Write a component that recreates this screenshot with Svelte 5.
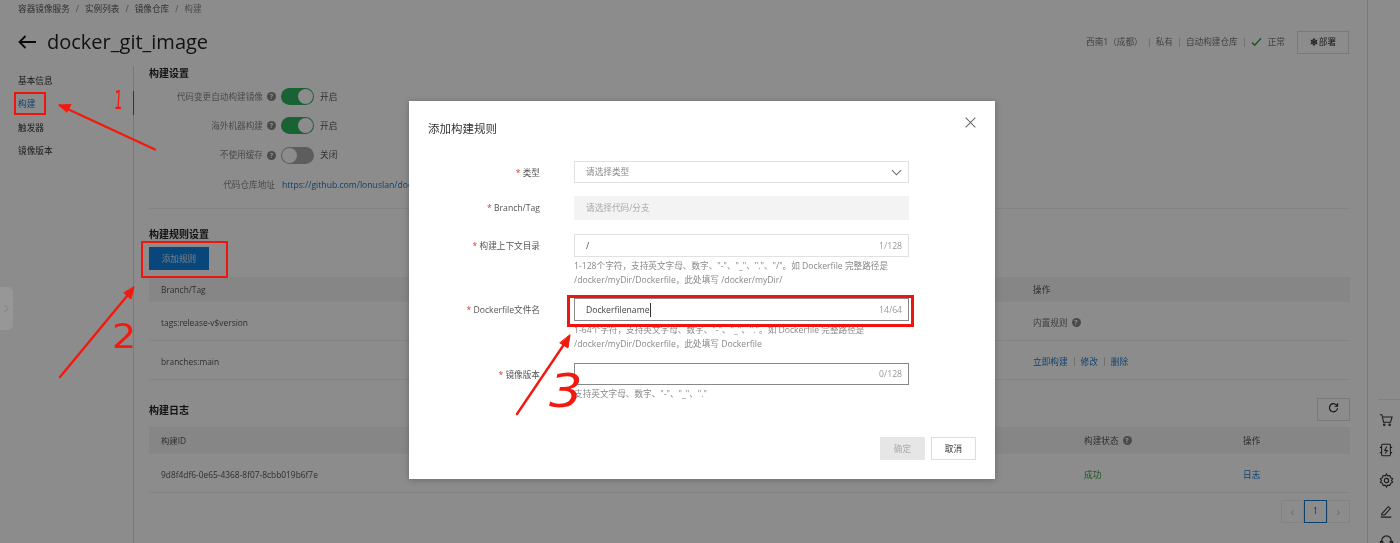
<script lang="ts">
  const crumbs = ['容器镜像服务', '实例列表', '镜像仓库', '构建'];
  const menu = ['基本信息', '构建', '触发器', '镜像版本'];
  const settings = [
    { label: '代码变更自动构建镜像', on: true, text: '开启' },
    { label: '海外机器构建', on: true, text: '开启' },
    { label: '不使用缓存', on: false, text: '关闭' }
  ];
</script>

<div class="page">
  <div class="workspace">
    <nav class="crumbs">
      {#each crumbs as c, i}
        {#if i > 0}<span class="sep">/</span>{/if}
        <span class:last={i === crumbs.length - 1}>{c}</span>
      {/each}
    </nav>

    <header class="titlebar">
      <svg class="back" viewBox="0 0 18 14" width="18" height="14" fill="none" stroke="#111" stroke-width="1.8">
        <path d="M18 7H1.5M7.5 1 1.5 7l6 6" />
      </svg>
      <h1>docker_git_image</h1>
      <div class="meta">
        <span>西南1（成都）</span><i></i>
        <span>私有</span><i></i>
        <span>自动构建仓库</span><i></i>
        <svg viewBox="0 0 12 10" width="11" height="10" fill="none" stroke="#2e9e3f" stroke-width="1.5"><path d="M1 5.5 4 8.5 11 1" /></svg>
        <span class="ok">正常</span>
        <button class="btn deploy">
          <svg viewBox="0 0 10 10" width="8" height="8" fill="none" stroke="#333" stroke-width="1.2">
            <circle cx="5" cy="5" r="3" />
            <path d="M5 0v10M0.7 2.500l8.600 5M0.7 7.500l8.600-5" />
          </svg>部署
        </button>
      </div>
    </header>

    <div class="body">
      <aside class="side">
        {#each menu as m, i}
          <div class="item" class:active={i === 1}>{m}</div>
        {/each}
      </aside>

      <main class="content">
        <h2>构建设置</h2>
        <div class="settings">
          {#each settings as s}
            <div class="setting">
              <div class="key">{s.label}<span class="q">?</span></div>
              <span class="toggle" class:on={s.on}></span>
              <span class="val">{s.text}</span>
            </div>
          {/each}
          <div class="setting">
            <div class="key plain">代码仓库地址</div>
            <a class="link" href="#repo">https://github.com/lonuslan/docker_git_image</a>
          </div>
        </div>
        <div class="divider"></div>

        <h2 class="rules-title">构建规则设置</h2>
        <button class="btn primary">添加规则</button>
        <div class="table rules">
          <div class="tr head"><span>Branch/Tag</span><span>操作</span></div>
          <div class="tr"><span>tags:release-v$version</span><span class="muted">内置规则<span class="q">?</span></span></div>
          <div class="tr">
            <span>branches:main</span>
            <span class="actions"><a href="#b">立即构建</a><i></i><a href="#e">修改</a><i></i><a href="#d">删除</a></span>
          </div>
        </div>

        <div class="log-head">
          <h2>构建日志</h2>
          <button class="btn refresh" aria-label="刷新">
            <svg viewBox="0 0 14 14" width="11" height="11" fill="none" stroke="#222" stroke-width="1.4">
              <path d="M11.8 5.2A5.2 5.2 0 1 0 12.2 8" /><path d="M12.2 1.6v3.9H8.4" fill="none" />
            </svg>
          </button>
        </div>
        <div class="table logs">
          <div class="tr head"><span>构建ID</span><span>构建状态<span class="q">?</span></span><span>操作</span></div>
          <div class="tr">
            <span>9d8f4df6-0e65-4368-8f07-8cbb019b6f7e</span>
            <span class="ok">成功</span>
            <a href="#log">日志</a>
          </div>
        </div>
        <div class="pager">
          <span class="pg dim">‹</span><span class="pg cur">1</span><span class="pg dim">›</span>
        </div>
      </main>
    </div>
  </div>

  <aside class="rail">
    <div class="tools">
      <svg viewBox="0 0 16 16" width="14" height="14" fill="none" stroke="#333" stroke-width="1.2"><path d="M1 2h2.4l1.8 8.5h8L15 4.500H4" /><circle cx="6" cy="13.5" r=".9" /><circle cx="12.2" cy="13.5" r=".9" /></svg>
      <svg viewBox="0 0 16 16" width="14" height="14" fill="none" stroke="#333" stroke-width="1.2"><rect x="3" y="1.5" width="10" height="13" rx="1" /><path d="M1 5h2M1 11h2M13 5h2M13 11h2M9 4 6.5 8.500h3L7 12" /></svg>
      <svg viewBox="0 0 16 16" width="15" height="15" fill="none" stroke="#333" stroke-width="1.2"><path d="M8 1l1.2 2.100 2.400-.4.800 2.300 2.100 1.200L13.400 8l1.100 1.800-2.100 1.200-.8 2.300-2.400-.4L8 15l-1.200-2.100-2.400.4-.8-2.300-2.100-1.200L2.600 8 1.500 6.200 3.600 5l.8-2.300 2.400.4z" /><circle cx="8" cy="8" r="2.3" /></svg>
      <svg viewBox="0 0 16 16" width="14" height="14" fill="none" stroke="#333" stroke-width="1.2"><path d="M3 11.500 10.500 3l2.500 2.200-6.600 7.300H3zM2 15h12" /></svg>
      <svg viewBox="0 0 16 16" width="15" height="15" fill="none" stroke="#333" stroke-width="1.2"><path d="M3 10V7a5 5 0 0 1 10 0v3" /><rect x="1.5" y="8" width="2.5" height="4" /><rect x="12" y="8" width="2.5" height="4" /></svg>
    </div>
  </aside>

  <div class="mask"></div>
  <div class="collapse">
    <svg viewBox="0 0 6 10" width="5" height="9" fill="none" stroke="#777" stroke-width="1"><path d="M1 1l4 4-4 4" /></svg>
  </div>

  <section class="modal">
    <svg class="close" viewBox="0 0 12 12" width="11" height="11" fill="none" stroke="#666" stroke-width="1.1"><path d="M.7.7l10.600 10.600M11.300.7.7 11.300" /></svg>
    <h3>添加构建规则</h3>
    <div class="form">
      <div class="row">
        <label><b>*</b> 类型</label>
        <div class="field select h22">
          <span class="ph">请选择类型</span>
          <svg viewBox="0 0 12 7" width="11" height="7" fill="none" stroke="#666" stroke-width="1.1"><path d="M1 1l5 5 5-5" /></svg>
        </div>
      </div>
      <div class="row r13">
        <label><b>*</b> Branch/Tag</label>
        <div class="field disabled"><span class="ph">请选择代码/分支</span></div>
      </div>
      <div class="row r14">
        <label><b>*</b> 构建上下文目录</label>
        <div>
          <div class="field h23"><span>/</span><em>1/128</em></div>
          <p class="help">1-128个字符，支持英文字母、数字、"-"、"_"、"."、"/"。如 Dockerfile 完整路径是<br />/docker/myDir/Dockerfile，此处填写 /docker/myDir/</p>
        </div>
      </div>
      <div class="row r11">
        <label><b>*</b> Dockerfile文件名</label>
        <div>
          <div class="field h23 focus"><span class="caret">Dockerfilename</span><em>14/64</em></div>
          <p class="help">1-64个字符，支持英文字母、数字、"-"、"_"、"."。如 Dockerfile 完整路径是<br />/docker/myDir/Dockerfile，此处填写 Dockerfile</p>
        </div>
      </div>
      <div class="row r12">
        <label><b>*</b> 镜像版本</label>
        <div>
          <div class="field h22 focus"><span></span><em>0/128</em></div>
          <p class="help">支持英文字母、数字、"-"、"_"、"."</p>
        </div>
      </div>
    </div>
    <footer>
      <button class="btn off">确定</button>
      <button class="btn">取消</button>
    </footer>
  </section>

  <!-- red marks drawn over the screenshot -->
  <div class="mark m1"></div>
  <div class="mark m2"></div>
  <div class="mark m3"></div>
  <svg class="scribble" viewBox="0 0 1400 543" width="1400" height="543" fill="none" stroke="#f21a0e" stroke-width="2.4" stroke-linecap="round">
    <path d="M155 149.500 60 105.500" />
    <path d="M59 105 71 104.500 67 112z" fill="#f21a0e" stroke-width="1" />
    <path d="M60 377 132 290" />
    <path d="M134 287 131 299 124 293z" fill="#f21a0e" stroke-width="1" />
    <path d="M517 414 569 337" />
    <path d="M570 335 568 348 560 343z" fill="#f21a0e" stroke-width="1" />
  </svg>
  <span class="num n1">1</span>
  <span class="num n2">2</span>
  <span class="num n3">3</span>
</div>

<style>
  :global(body) {
    margin: 0;
    background: #fff;
  }

  .page {
    position: relative;
    display: flex;
    width: 1400px;
    height: 543px;
    overflow: hidden;
    background: #fff;
    color: #333;
    font: 8.650px/14px "Open Sans", "Noto Sans CJK SC", sans-serif;
    filter: blur(0.3px);
  }

  .workspace {
    flex: 1;
    min-width: 0;
  }

  .crumbs {
    display: flex;
    gap: 6px;
    height: 18px;
    padding-left: 18px;
    line-height: 18px;
    color: #555;
  }

  .crumbs .sep,
  .crumbs .last {
    color: #888;
  }

  .titlebar {
    display: flex;
    align-items: center;
    height: 48px;
    padding: 0 18px;
  }

  .back {
    margin-right: 11px;
  }

  h1 {
    margin: 0;
    font-size: 20px;
    font-weight: 400;
    color: #222;
  }

  .meta {
    display: flex;
    align-items: center;
    margin-left: auto;
    color: #777;
  }

  .meta i {
    width: 1px;
    height: 9px;
    margin: 0 6px;
    background: #ccc;
  }

  .meta .ok {
    margin: 0 12px 0 6px;
    color: #777;
  }

  .btn {
    height: 23px;
    padding: 0;
    border: 1px solid #ddd;
    background: #fff;
    color: #333;
    font: inherit;
    width: 45px;
  }

  .deploy {
    width: 52px;
  }

  .deploy svg {
    margin-right: 1px;
    vertical-align: -1px;
  }

  .body {
    display: flex;
    height: 477px;
  }

  .side {
    flex: none;
    width: 133px;
    padding-top: 4px;
    border-right: 1px solid #ddd;
  }

  .item {
    position: relative;
    height: 23.300px;
    padding-left: 18px;
    line-height: 23px;
    color: #333;
  }

  .item.active {
    color: #1a76c8;
  }

  .item.active::after {
    content: '';
    position: absolute;
    right: -1px;
    top: -2.500px;
    width: 1px;
    height: 24px;
    background: #1a76c8;
  }

  .content {
    flex: 1;
    min-width: 0;
    padding: 0 17px 0 15px;
  }

  h2 {
    margin: 0;
    font-size: 10px;
    line-height: 14px;
    font-weight: 700;
    color: #222;
  }

  .settings {
    margin-top: 2px;
  }

  .setting {
    display: flex;
    align-items: center;
    height: 29.300px;
  }

  .key {
    display: flex;
    align-items: center;
    justify-content: flex-end;
    width: 127px;
    padding-right: 5px;
    color: #888;
    flex: none;
  }

  .key.plain {
    width: 126px;
    padding-right: 7px;
  }

  .q {
    display: inline-flex;
    align-items: center;
    justify-content: center;
    width: 9px;
    height: 9px;
    margin-left: 4px;
    border-radius: 50%;
    background: #888;
    color: #fff;
    font-size: 7px;
    font-weight: 700;
    line-height: 1;
  }

  .toggle {
    position: relative;
    width: 33px;
    height: 17px;
    border-radius: 9px;
    background: #aaa;
    flex: none;
  }

  .toggle::after {
    content: '';
    position: absolute;
    top: 1px;
    left: 1px;
    width: 15px;
    height: 15px;
    border-radius: 50%;
    background: #fff;
  }

  .toggle.on {
    background: #2fb35f;
  }

  .toggle.on::after {
    left: 17px;
  }

  .val {
    margin-left: 6px;
    color: #555;
  }

  a {
    color: #1a76c8;
    text-decoration: none;
  }

  .divider {
    height: 1px;
    margin-top: 9px;
    background: #eee;
  }

  .rules-title {
    margin-top: 18px;
  }

  .primary {
    display: block;
    width: 60px;
    margin-top: 6px;
    border: 0;
    background: #1080e0;
    color: #cfe2f2;
  }

  .table .tr {
    display: grid;
    align-items: center;
    height: 39px;
    padding: 3px 0 0 12px;
    border-bottom: 1px solid #eee;
    box-sizing: border-box;
    color: #555;
  }

  .table .tr > span:first-child {
    font-size: 8.400px;
  }

  .table .head {
    padding-top: 0;
    background: #f5f5f5;
    border-bottom: 0;
  }

  .rules {
    margin-top: 7px;
  }

  .rules .tr {
    grid-template-columns: 872px 1fr;
  }

  .rules .head {
    height: 25px;
  }

  .muted {
    display: flex;
    align-items: center;
    color: #777;
  }

  .actions {
    display: flex;
    align-items: center;
  }

  .actions i {
    width: 1px;
    height: 9px;
    margin: 0 6px;
    background: #ccc;
  }

  .log-head {
    display: flex;
    align-items: center;
    justify-content: space-between;
    height: 23px;
    margin-top: 18px;
  }

  .refresh {
    width: 33px;
  }

  .logs {
    margin-top: 6px;
  }

  .logs .tr {
    grid-template-columns: 923px 159px 1fr;
  }

  .logs .head {
    height: 27px;
  }

  .logs .head span:nth-child(2) {
    display: flex;
    align-items: center;
  }

  .logs .ok {
    color: #2e9e3f;
  }

  .pager {
    display: flex;
    justify-content: flex-end;
    margin-top: 7px;
  }

  .pg {
    width: 23px;
    height: 23px;
    box-sizing: border-box;
    border: 1px solid #eee;
    text-align: center;
    line-height: 21px;
    color: #555;
  }

  .pg.dim {
    color: #ccc;
    font-size: 13px;
  }

  .pg.cur {
    border-color: #1a76c8;
  }

  .rail {
    flex: none;
    width: 32px;
    border-left: 1px solid #ddd;
  }

  .tools {
    display: flex;
    flex-direction: column;
    align-items: center;
    gap: 16px;
    width: 16px;
    margin: 399px 0 0 10px;
    padding: 13px 6px 0 0;
    border-top: 1px solid #e6e6e6;
  }

  .mask {
    position: absolute;
    inset: 0;
    background: rgba(0, 0, 0, 0.45);
  }

  .collapse {
    position: absolute;
    left: 0;
    top: 287px;
    display: flex;
    align-items: center;
    justify-content: center;
    width: 13px;
    height: 43px;
    border-radius: 0 5px 5px 0;
    background: rgba(255, 255, 255, 0.1);
  }

  .modal {
    position: absolute;
    left: 409px;
    top: 101px;
    width: 586px;
    height: 378px;
    box-sizing: border-box;
    padding: 20px 19px 19px;
    background: #fff;
    box-shadow: 0 1px 6px rgba(0, 0, 0, 0.25);
  }

  .close {
    position: absolute;
    right: 19px;
    top: 16px;
  }

  h3 {
    margin: 0;
    font-size: 11.500px;
    line-height: 16px;
    font-weight: 400;
    color: #333;
  }

  .form {
    margin-top: 24px;
  }

  .row {
    display: grid;
    grid-template-columns: 112px 335px;
    column-gap: 34px;
  }

  .r13 {
    margin-top: 13px;
  }

  .r14 {
    margin-top: 14px;
  }

  .r11 {
    margin-top: 11px;
  }

  .r12 {
    margin-top: 12px;
  }

  .row label {
    height: 22px;
    line-height: 24px;
    text-align: right;
    color: #555;
    white-space: nowrap;
  }

  .row label b {
    color: #e0362c;
    font-weight: 400;
  }

  .field {
    display: flex;
    align-items: center;
    justify-content: space-between;
    height: 24px;
    box-sizing: border-box;
    padding: 0 6px 0 11px;
    border: 1px solid #e1e1e1;
    color: #444;
  }

  .field em {
    font-style: normal;
    color: #999;
  }

  .field.h22 {
    height: 22px;
  }

  .field.h23 {
    height: 23px;
  }

  .field.focus {
    border-color: #888;
  }

  .field.disabled {
    border-color: #f3f3f3;
    background: #f3f3f3;
  }

  .ph {
    color: #aaa;
  }

  .select .ph {
    color: #888;
  }

  .caret {
    border-right: 1px solid #333;
  }

  .help {
    margin: 3px 0 0;
    line-height: 13.500px;
    color: #888;
    white-space: nowrap;
  }

  footer {
    display: flex;
    justify-content: flex-end;
    gap: 6px;
    margin-top: 35.500px;
  }

  .off {
    border-color: #e6e6e6;
    background: #e6e6e6;
    color: #aaa;
  }

  .mark {
    position: absolute;
    box-sizing: border-box;
    border: 2.500px solid #f0140c;
  }

  .m1 {
    left: 14px;
    top: 92px;
    width: 32px;
    height: 23px;
  }

  .m2 {
    left: 141px;
    top: 241px;
    width: 87px;
    height: 37px;
  }

  .m3 {
    left: 567px;
    top: 295px;
    width: 347px;
    height: 32px;
    border-width: 3px;
  }

  .scribble {
    position: absolute;
    inset: 0;
    pointer-events: none;
  }

  .num {
    position: absolute;
    color: #f21a0e;
    font-family: "DejaVu Sans", sans-serif;
    line-height: 1;
  }

  .n1 {
    left: 110px;
    top: 87px;
    font-size: 26px;
    transform: scaleX(0.5) skewX(-6deg);
  }

  .n2 {
    left: 112px;
    top: 320px;
    font-size: 33px;
    transform: scaleX(1.15);
    transform-origin: left;
  }

  .n3 {
    left: 549px;
    top: 368px;
    font-size: 46px;
    font-style: italic;
    transform: scaleX(1.15);
    transform-origin: left;
  }
</style>
